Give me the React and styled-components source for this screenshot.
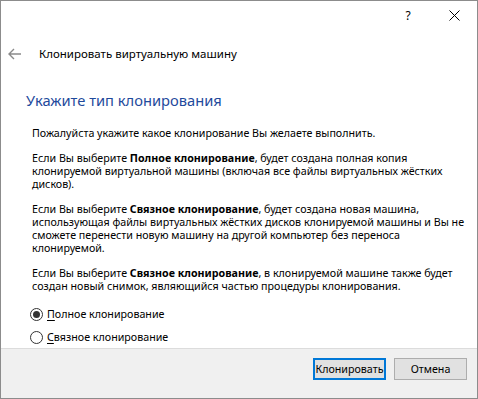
import React from "react";
import styled, { createGlobalStyle } from "styled-components";

const Global = createGlobalStyle`
  html, body { margin: 0; background: #fff; }
  body { font-family: "Noto Sans", "Segoe UI", sans-serif; color: #000; }
`;

const Window = styled.div`
  box-sizing: border-box;
  width: 478px;
  height: 399px;
  border: 1px solid #8c8c8c;
  display: flex;
  flex-direction: column;
  background: #fff;
`;

const TitleBar = styled.div`
  height: 29px;
  display: flex;
  justify-content: flex-end;
`;

const CaptionButton = styled.div`
  width: 46px;
  height: 29px;
  display: flex;
  align-items: center;
  justify-content: center;
  font-size: 12px;
  color: #000;
`;

const NavRow = styled.div`
  margin-top: 14px;
  height: 20px;
  display: flex;
  align-items: center;
  padding-left: 7px;
  gap: 17px;
`;

const WizardTitle = styled.div`
  font-size: 11.5px;
  line-height: 20px;
`;

const Page = styled.div`
  padding-left: 25px;
`;

const Heading = styled.div`
  margin-top: 26px;
  font-size: 14.7px;
  line-height: 20px;
  color: #1f4a9c;
`;

const Body = styled.div`
  margin-top: 17px;
  padding-left: 6px;
  font-size: 10.7px;
  line-height: 13px;
  white-space: nowrap;
`;

const Para = styled.p`
  margin: 0 0 12px;
`;

const Options = styled.div`
  margin-top: 8px;
  display: flex;
  flex-direction: column;
  gap: 5px;
  padding-left: 4px;
`;

const Option = styled.label`
  display: flex;
  align-items: center;
  gap: 4px;
  height: 18px;
  font-size: 10.7px;
`;

const Radio = styled.span`
  box-sizing: border-box;
  width: 13px;
  height: 13px;
  border: 1px solid #333;
  border-radius: 50%;
  display: flex;
  align-items: center;
  justify-content: center;
  &::after {
    content: "";
    width: 7px;
    height: 7px;
    border-radius: 50%;
    background: ${(p) => (p.$checked ? "#333" : "transparent")};
  }
`;

const Mnemonic = styled.span`
  text-decoration: underline;
  text-underline-offset: 2px;
`;

const Footer = styled.div`
  margin-top: auto;
  height: 40px;
  border-top: 1px solid #dcdcdc;
  background: #f0f0f0;
  display: flex;
  justify-content: flex-end;
  align-items: flex-start;
  padding: 9px 10px 0 0;
  gap: 8px;
`;

const Button = styled.button`
  box-sizing: border-box;
  width: 73px;
  height: 22px;
  padding: 0;
  font-family: inherit;
  font-size: 10.7px;
  color: #000;
  background: #e1e1e1;
  border: ${(p) => (p.$default ? "2px solid #0078d7" : "1px solid #adadad")};
`;

function BackArrow() {
  return (
    <svg width="14" height="12" viewBox="0 0 14 12">
      <path d="M1 6 H13 M6 1 L1 6 L6 11" fill="none" stroke="#8a8a8a" strokeWidth="1.4" />
    </svg>
  );
}

function CloseIcon() {
  return (
    <svg width="11" height="11" viewBox="0 0 11 11">
      <path d="M0.5 0.5 L10.5 10.5 M10.5 0.5 L0.5 10.5" stroke="#000" strokeWidth="1" />
    </svg>
  );
}

export default function App() {
  return (
    <>
      <Global />
      <Window>
        <TitleBar>
          <CaptionButton>?</CaptionButton>
          <CaptionButton>
            <CloseIcon />
          </CaptionButton>
        </TitleBar>
        <NavRow>
          <BackArrow />
          <WizardTitle>Клонировать виртуальную машину</WizardTitle>
        </NavRow>
        <Page>
          <Heading>Укажите тип клонирования</Heading>
          <Body>
            <Para>Пожалуйста укажите какое клонирование Вы желаете выполнить.</Para>
            <Para>
              Если Вы выберите <b>Полное клонирование</b>, будет создана полная копия
              <br />
              клонируемой виртуальной машины (включая все файлы виртуальных жёстких
              <br />
              дисков).
            </Para>
            <Para>
              Если Вы выберите <b>Связное клонирование</b>, будет создана новая машина,
              <br />
              использующая файлы виртуальных жёстких дисков клонируемой машины и Вы не
              <br />
              сможете перенести новую машину на другой компьютер без переноса
              <br />
              клонируемой.
            </Para>
            <Para>
              Если Вы выберите <b>Связное клонирование</b>, в клонируемой машине также будет
              <br />
              создан новый снимок, являющийся частью процедуры клонирования.
            </Para>
          </Body>
          <Options>
            <Option>
              <Radio $checked />
              <span>
                <Mnemonic>П</Mnemonic>олное клонирование
              </span>
            </Option>
            <Option>
              <Radio />
              <span>
                <Mnemonic>С</Mnemonic>вязное клонирование
              </span>
            </Option>
          </Options>
        </Page>
        <Footer>
          <Button $default>Клонировать</Button>
          <Button>Отмена</Button>
        </Footer>
      </Window>
    </>
  );
}
